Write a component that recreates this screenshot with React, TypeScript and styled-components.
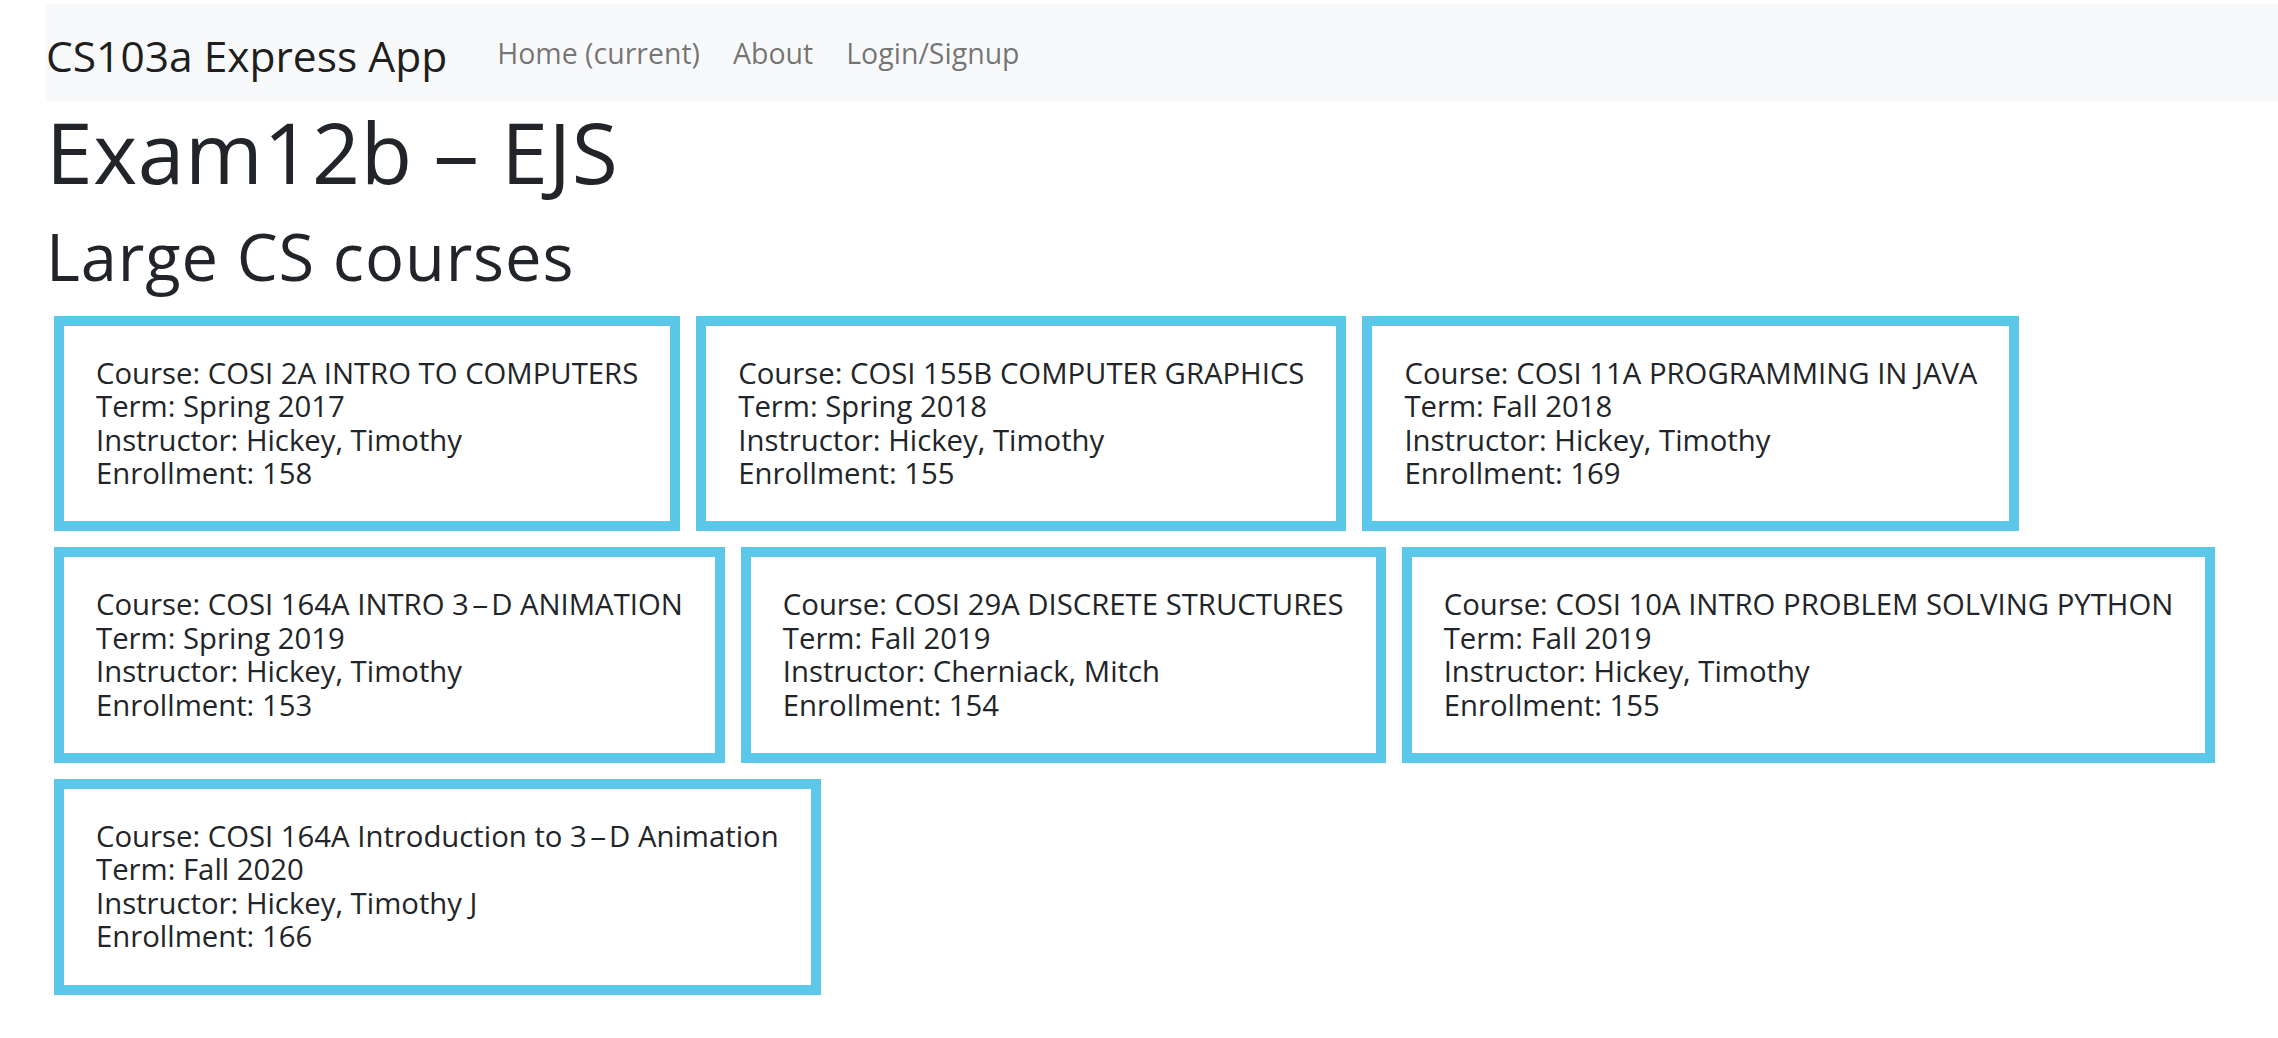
import React from 'react';
import styled, { createGlobalStyle } from 'styled-components';

const GlobalStyle = createGlobalStyle`
  html, body {
    margin: 0;
    padding: 0;
    background: #ffffff;
  }
  body {
    font-family: "Open Sans", "Noto Sans", sans-serif;
    color: #212529;
  }
`;

const Page = styled.div`
  padding: 4px 0 40px 46px;
`;

const NavBar = styled.nav`
  display: flex;
  align-items: center;
  height: 98px;
  background: #f8f9fa;
`;

const Brand = styled.a`
  font-size: 42.5px;
  line-height: 1.2;
  color: rgba(0, 0, 0, 0.9);
  text-decoration: none;
  margin-right: 50px;
  padding-top: 4px;
  white-space: nowrap;
`;

const NavLinks = styled.div`
  display: flex;
  align-items: center;
  gap: 33px;
`;

const NavLink = styled.a`
  font-size: 28.5px;
  line-height: 1.2;
  color: rgba(0, 0, 0, 0.55);
  text-decoration: none;
  white-space: nowrap;
`;

const Title = styled.h1`
  margin: 0 0 14px;
  font-size: 84px;
  font-weight: 400;
  line-height: 1.2;
  letter-spacing: 0.6px;
`;

const SubTitle = styled.h2`
  margin: 0;
  font-size: 65px;
  font-weight: 400;
  line-height: 1.2;
  letter-spacing: 0.9px;
`;

/* the reference font draws a long hyphen */
const Dash = styled.span<{ $width: number }>`
  display: inline-block;
  width: ${(p) => p.$width}em;
  text-align: center;
  transform: scaleX(1.9);
`;

const CardGrid = styled.div`
  display: flex;
  flex-wrap: wrap;
  align-items: flex-start;
  gap: 16px;
  margin-top: 21px;
  padding-left: 8px;
`;

const Card = styled.div`
  border: 10px solid #5bc8ea;
  padding: 31px 32px;
  background: #ffffff;
`;

const CardLine = styled.div`
  font-size: 29.3px;
  line-height: 33.4px;
  white-space: nowrap;
`;

const withDashes = (text: string, width: number) =>
  text.split('-').map((part, i) => (
    <React.Fragment key={i}>
      {i > 0 && <Dash $width={width}>-</Dash>}
      {part}
    </React.Fragment>
  ));

interface Course {
  title: string;
  term: string;
  instructor: string;
  enrollment: number;
}

const courses: Course[] = [
  { title: 'COSI 2A INTRO TO COMPUTERS', term: 'Spring 2017', instructor: 'Hickey, Timothy', enrollment: 158 },
  { title: 'COSI 155B COMPUTER GRAPHICS', term: 'Spring 2018', instructor: 'Hickey, Timothy', enrollment: 155 },
  { title: 'COSI 11A PROGRAMMING IN JAVA', term: 'Fall 2018', instructor: 'Hickey, Timothy', enrollment: 169 },
  { title: 'COSI 164A INTRO 3-D ANIMATION', term: 'Spring 2019', instructor: 'Hickey, Timothy', enrollment: 153 },
  { title: 'COSI 29A DISCRETE STRUCTURES', term: 'Fall 2019', instructor: 'Cherniack, Mitch', enrollment: 154 },
  { title: 'COSI 10A INTRO PROBLEM SOLVING PYTHON', term: 'Fall 2019', instructor: 'Hickey, Timothy', enrollment: 155 },
  { title: 'COSI 164A Introduction to 3-D Animation', term: 'Fall 2020', instructor: 'Hickey, Timothy J', enrollment: 166 },
];

const CourseCard: React.FC<{ course: Course }> = ({ course }) => (
  <Card>
    <CardLine>Course: {withDashes(course.title, 0.76)}</CardLine>
    <CardLine>Term: {course.term}</CardLine>
    <CardLine>Instructor: {course.instructor}</CardLine>
    <CardLine>Enrollment: {course.enrollment}</CardLine>
  </Card>
);

export default function App() {
  return (
    <>
      <GlobalStyle />
      <Page>
        <NavBar>
          <Brand href="#">CS103a Express App</Brand>
          <NavLinks>
            <NavLink href="#">Home (current)</NavLink>
            <NavLink href="#">About</NavLink>
            <NavLink href="#">Login/Signup</NavLink>
          </NavLinks>
        </NavBar>
        <Title>{withDashes('Exam12b - EJS', 0.52)}</Title>
        <SubTitle>Large CS courses</SubTitle>
        <CardGrid>
          {courses.map((c) => (
            <CourseCard key={c.title} course={c} />
          ))}
        </CardGrid>
      </Page>
    </>
  );
}
